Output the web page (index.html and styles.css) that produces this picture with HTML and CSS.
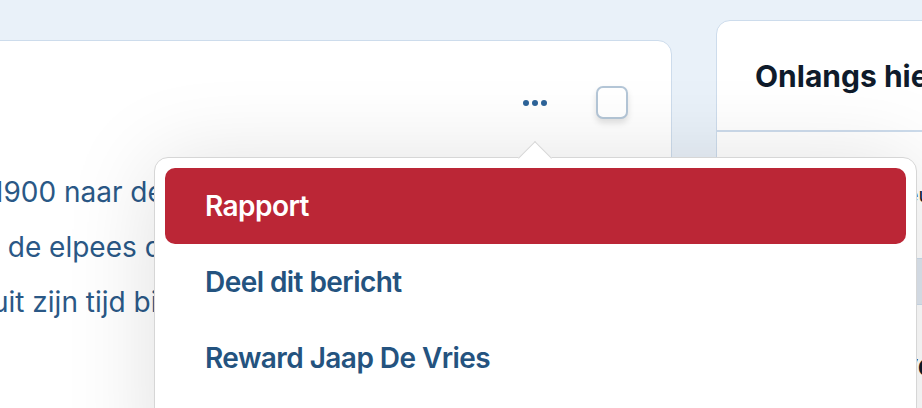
FILE: index.html
```html
<!DOCTYPE html>
<html lang="nl">
<head>
    <meta charset="UTF-8">
    <meta name="viewport" content="width=device-width, initial-scale=1.0">
    <title>Bericht</title>
    <link rel="stylesheet" href="styles.css">
</head>
<body>
    <div class="page">
        <div class="post-card">
            <div class="post-header">
                <button class="dots-button" aria-label="Meer opties">
                    <span class="dot"></span><span class="dot"></span><span class="dot"></span>
                </button>
                <span class="check-box"></span>
            </div>

            <p class="post-text">
                1900 naar de hoofdstad en<br>
                &nbsp;&nbsp;de elpees die hij verzamelde<br>
                uit zijn tijd bij de radio.
            </p>

            <!-- Menu dat opent via de drie puntjes -->
            <div class="dropdown">
                <a class="dropdown-item active" href="#">Rapport</a>
                <a class="dropdown-item" href="#">Deel dit bericht</a>
                <a class="dropdown-item" href="#">Reward Jaap De Vries</a>
                <a class="dropdown-item" href="#">Verberg dit bericht</a>
            </div>
        </div>

        <div class="side-card">
            <div class="side-header">
                <h2>Onlangs hierheen verhuisd</h2>
            </div>
            <div class="side-item">Ingrid Bakker, nieuw in Leeuwarden</div>
            <div class="side-band"></div>
            <div class="side-header second">
                <h2>Populaire verhalen</h2>
            </div>
        </div>
    </div>
</body>
</html>
```

FILE: styles.css
```css
body {
    margin: 0;
    background: #e9f1f9;
    font-family: 'Inter', 'Noto Sans', sans-serif;
    overflow: hidden;
}

.page {
    display: flex;
    align-items: flex-start;
    gap: 44px;
    padding-top: 20px;
    margin-left: -28px;
}

.post-card {
    position: relative;
    flex: 0 0 700px;
    box-sizing: border-box;
    height: 480px;
    margin-top: 20px;
    background: #fff;
    border: 1px solid #cddcec;
    border-radius: 14px;
}

.post-header {
    display: flex;
    justify-content: flex-end;
    align-items: center;
    gap: 41px;
    padding: 45px 43px 0 0;
}

.dots-button {
    display: flex;
    justify-content: center;
    align-items: center;
    gap: 3px;
    width: 40px;
    height: 32px;
    padding: 0;
    background: none;
    border: none;
    cursor: pointer;
}

.dot {
    width: 6px;
    height: 6px;
    border-radius: 50%;
    background: #2d6399;
}

.check-box {
    width: 32px;
    height: 33px;
    box-sizing: border-box;
    border: 2px solid #b4c6d7;
    border-radius: 7px;
    background: #fff;
    box-shadow: 0 4px 6px rgba(0, 0, 0, 0.12);
}

.post-text {
    margin: 46px 0 0 19px;
    font-size: 28px;
    line-height: 55px;
    color: #2a5886;
    white-space: nowrap;
}

.dropdown {
    position: absolute;
    z-index: 5;
    top: 116px;
    left: 181px;
    width: 763px;
    box-sizing: border-box;
    padding: 10px;
    background: #fff;
    border: 1px solid #d6d6d6;
    border-radius: 14px;
    box-shadow: 0 6px 90px rgba(0, 0, 0, 0.13);
}

.dropdown::before {
    content: '';
    position: absolute;
    z-index: -1;
    top: -12px;
    left: 368px;
    width: 23px;
    height: 23px;
    background: #fff;
    border-top: 1px solid #d6d6d6;
    border-left: 1px solid #d6d6d6;
    transform: rotate(45deg);
}

.dropdown-item {
    display: flex;
    align-items: center;
    height: 76px;
    padding: 0 40px;
    border-radius: 10px;
    font-size: 28px;
    font-weight: 600;
    letter-spacing: -0.02em;
    color: #24537f;
    text-decoration: none;
}

.dropdown-item.active {
    background: #bb2636;
    color: #fff;
}

.side-card {
    flex: 0 0 380px;
    box-sizing: border-box;
    height: 480px;
    background: #fff;
    border: 1px solid #cddcec;
    border-radius: 14px;
}

.side-header {
    display: flex;
    align-items: center;
    height: 109px;
    padding: 0 38px;
    border-bottom: 2px solid #cddcec;
}

.side-header h2 {
    margin: 0;
    font-size: 30px;
    font-weight: 700;
    color: #0f1b2b;
    white-space: nowrap;
}

.side-header.second {
    border-bottom: none;
    height: 120px;
}

.side-item {
    padding: 0 38px;
    height: 126px;
    line-height: 126px;
    font-size: 20px;
    color: #0f1b2b;
    white-space: nowrap;
}

.side-band {
    height: 45px;
    background: #dfe7f0;
    border-top: 1px solid #cddcec;
    border-bottom: 1px solid #cddcec;
}
```
